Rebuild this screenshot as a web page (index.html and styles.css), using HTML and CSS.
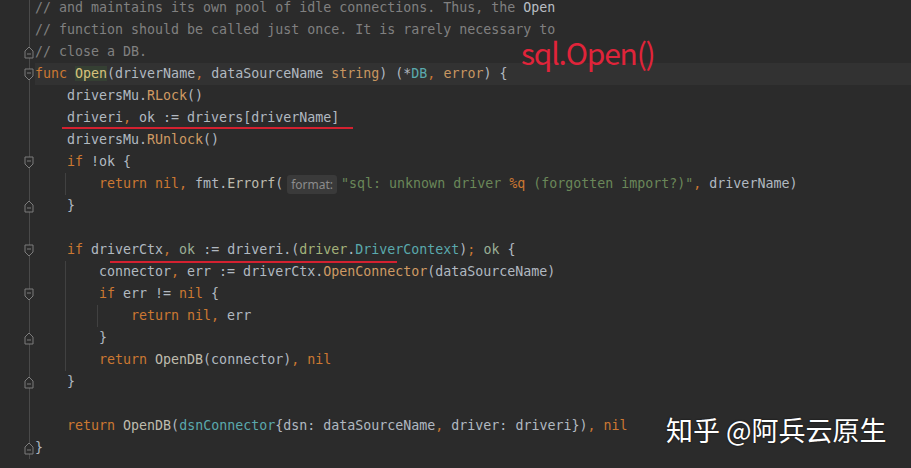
FILE: index.html
```html
<!DOCTYPE html>
<html>
<head>
<meta charset="utf-8">
<link rel="stylesheet" href="styles.css">
</head>
<body>
<div class="screen">
  <div class="editor">
    <div class="ln"><div class="g"></div><div class="code"><span class="c">// and maintains its own pool of idle connections. Thus, the <span class="doc">Open</span></span></div></div>
    <div class="ln"><div class="g"></div><div class="code"><span class="c">// function should be called just once. It is rarely necessary to</span></div></div>
    <div class="ln"><div class="g"><svg class="fold" width="10" height="13" viewBox="0 0 10 13"><path d="M1 12 H9 V5 L5 1 L1 5 Z" /><path d="M3 8 H7" /></svg></div><div class="code"><span class="c">// close a DB.</span></div></div>
    <div class="ln cur"><div class="g"><svg class="fold" width="10" height="13" viewBox="0 0 10 13"><path d="M1 1 H9 V8 L5 12 L1 8 Z" /><path d="M3 5 H7" /></svg></div><div class="code"><span class="k">func</span> <span class="fn">Open</span>(driverName<span class="p">,</span> dataSourceName <span class="bt">string</span>) (*<span class="t">DB</span><span class="p">,</span> <span class="bt">error</span>) {</div></div>
    <div class="ln"><div class="g"></div><div class="code"><span class="i"></span>driversMu.<span class="m">RLock</span>()</div></div>
    <div class="ln"><div class="g"></div><div class="code"><span class="i"></span>driveri<span class="p">,</span> ok := drivers[driverName]</div></div>
    <div class="ln"><div class="g"></div><div class="code"><span class="i"></span>driversMu.<span class="m">RUnlock</span>()</div></div>
    <div class="ln"><div class="g"><svg class="fold" width="10" height="13" viewBox="0 0 10 13"><path d="M1 1 H9 V8 L5 12 L1 8 Z" /><path d="M3 5 H7" /></svg></div><div class="code"><span class="i"></span><span class="k">if</span> !ok {</div></div>
    <div class="ln"><div class="g"></div><div class="code"><span class="i v"></span><span class="i"></span><span class="k">return</span> <span class="k">nil</span><span class="p">,</span> fmt.<span class="call">Errorf</span>(<span class="hint">format:</span><span class="s">"sql: unknown driver <span class="e">%q</span> (forgotten import?)"</span><span class="p">,</span> driverName)</div></div>
    <div class="ln"><div class="g"><svg class="fold" width="10" height="13" viewBox="0 0 10 13"><path d="M1 12 H9 V5 L5 1 L1 5 Z" /><path d="M3 8 H7" /></svg></div><div class="code"><span class="i"></span>}</div></div>
    <div class="ln"><div class="g"></div><div class="code"> </div></div>
    <div class="ln"><div class="g"><svg class="fold" width="10" height="13" viewBox="0 0 10 13"><path d="M1 1 H9 V8 L5 12 L1 8 Z" /><path d="M3 5 H7" /></svg></div><div class="code"><span class="i"></span><span class="k">if</span> driverCtx<span class="p">,</span> <span class="ok">ok</span> := driveri.(<span class="pk">driver</span>.<span class="t">DriverContext</span>)<span class="p">;</span> <span class="ok">ok</span> {</div></div>
    <div class="ln"><div class="g"></div><div class="code"><span class="i v"></span><span class="i"></span>connector<span class="p">,</span> err := driverCtx.<span class="m">OpenConnector</span>(dataSourceName)</div></div>
    <div class="ln"><div class="g"><svg class="fold" width="10" height="13" viewBox="0 0 10 13"><path d="M1 1 H9 V8 L5 12 L1 8 Z" /><path d="M3 5 H7" /></svg></div><div class="code"><span class="i v"></span><span class="i"></span><span class="k">if</span> err != <span class="k">nil</span> {</div></div>
    <div class="ln"><div class="g"></div><div class="code"><span class="i v"></span><span class="i v"></span><span class="i"></span><span class="k">return</span> <span class="k">nil</span><span class="p">,</span> err</div></div>
    <div class="ln"><div class="g"><svg class="fold" width="10" height="13" viewBox="0 0 10 13"><path d="M1 12 H9 V5 L5 1 L1 5 Z" /><path d="M3 8 H7" /></svg></div><div class="code"><span class="i v"></span><span class="i"></span>}</div></div>
    <div class="ln"><div class="g"></div><div class="code"><span class="i v"></span><span class="i"></span><span class="k">return</span> <span class="call">OpenDB</span>(connector)<span class="p">,</span> <span class="k">nil</span></div></div>
    <div class="ln"><div class="g"><svg class="fold" width="10" height="13" viewBox="0 0 10 13"><path d="M1 12 H9 V5 L5 1 L1 5 Z" /><path d="M3 8 H7" /></svg></div><div class="code"><span class="i"></span>}</div></div>
    <div class="ln"><div class="g"></div><div class="code"> </div></div>
    <div class="ln"><div class="g"></div><div class="code"><span class="i"></span><span class="k">return</span> <span class="call">OpenDB</span>(<span class="t">dsnConnector</span>{dsn: dataSourceName<span class="p">,</span> driver: driveri})<span class="p">,</span> <span class="k">nil</span></div></div>
    <div class="ln"><div class="g"><svg class="fold" width="10" height="13" viewBox="0 0 10 13"><path d="M1 12 H9 V5 L5 1 L1 5 Z" /><path d="M3 8 H7" /></svg></div><div class="code">}</div></div>
  </div>
  <div class="mark mark-1"></div>
  <div class="mark mark-2"></div>
  <div class="note">sql.Open()</div>
  <div class="wm">知乎 @阿兵云原生</div>
</div>
</body>
</html>
```
FILE: styles.css
```css
body {
  margin: 0;
  background: #2b2b2b;
}
.screen {
  position: relative;
  width: 911px;
  height: 468px;
  overflow: hidden;
  background: #2b2b2b;
}
.editor {
  margin-top: -3px;
  font-family: "DejaVu Sans Mono", "Liberation Mono", monospace;
  font-size: 13.3px;
  color: #b1b9c1;
}
.ln {
  display: flex;
  height: 22px;
  line-height: 22px;
}
.g {
  width: 35px;
  flex: none;
  box-sizing: border-box;
  padding-right: 1px;
  display: flex;
  align-items: center;
  justify-content: flex-end;
  background: linear-gradient(to right, transparent 29px, #4a4a4a 29px, #4a4a4a 30px, transparent 30px);
}
.fold {
  display: block;
}
.fold path {
  fill: #2b2b2b;
  stroke: #7c7c7c;
  stroke-width: 1;
}
.fold path + path {
  fill: none;
}
.code {
  flex: 1;
  white-space: pre;
}
.cur .code {
  background: #323232;
}
.i {
  display: inline-block;
  width: 32px;
  height: 22px;
  vertical-align: top;
}
.i.v {
  background: linear-gradient(to right, transparent 30px, #414141 30px, #414141 31px, transparent 31px);
}
.c { color: #808080; }
.doc { color: #b9bec3; }
.k { color: #cc7832; }
.bt { color: #c89660; }
.fn { color: #d6c27c; background: #354033; }
.t { color: #5aa9ad; }
.m { color: #cf9a63; }
.call { color: #bfbcae; }
.p { color: #cc7832; }
.s { color: #6a8759; }
.e { color: #cc7832; }
.pk { color: #a3b27a; }
.ok { color: #9aae96; }
.hint {
  display: inline-block;
  vertical-align: top;
  margin: 2px 4px 0 4px;
  height: 19px;
  line-height: 19px;
  padding: 0 4px;
  border-radius: 3px;
  background: #3a3a3a;
  color: #8c8c8c;
  font-family: "Noto Sans", "Open Sans", sans-serif;
  font-size: 12px;
}
.mark {
  position: absolute;
  height: 2px;
  background: #d42130;
}
.mark-1 {
  left: 62px;
  top: 127px;
  width: 291px;
}
.mark-2 {
  left: 110px;
  top: 261px;
  width: 287px;
}
.note {
  position: absolute;
  left: 521px;
  top: 32px;
  font-family: "Noto Sans CJK SC", "Noto Sans", sans-serif;
  font-size: 30px;
  line-height: 40px;
  letter-spacing: -1.2px;
  color: #e0243a;
}
.wm {
  position: absolute;
  left: 666px;
  top: 412px;
  font-family: "Noto Sans CJK SC", sans-serif;
  font-size: 27px;
  line-height: 36px;
  color: #ffffff;
  text-shadow: 0 0 2px rgba(0, 0, 0, 0.7);
  white-space: nowrap;
}
```
